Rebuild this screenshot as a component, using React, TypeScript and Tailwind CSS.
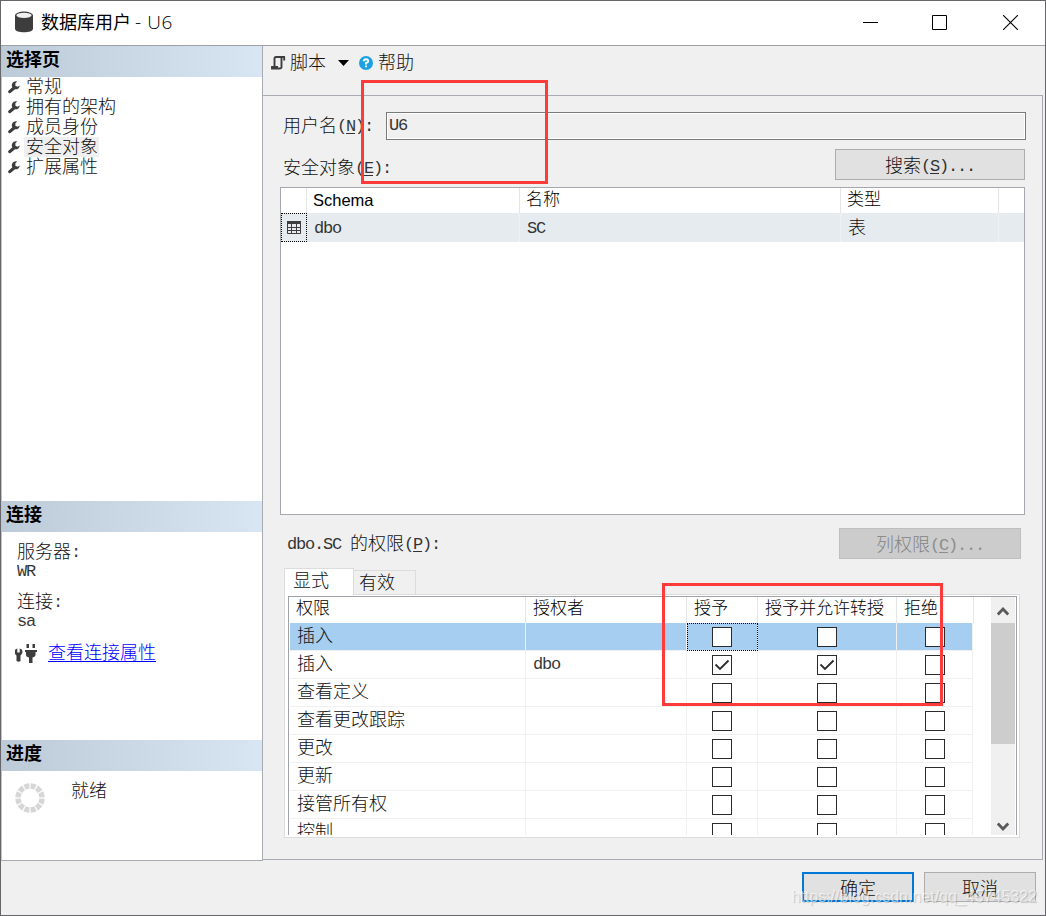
import { Fragment, ReactNode } from 'react';
import clsx from 'clsx';

const pages = ['常规', '拥有的架构', '成员身份', '安全对象', '扩展属性'];

const permissions = [
  { name: '插入', grantor: '', grant: false, withGrant: false, deny: false },
  { name: '插入', grantor: 'dbo', grant: true, withGrant: true, deny: false },
  { name: '查看定义', grantor: '', grant: false, withGrant: false, deny: false },
  { name: '查看更改跟踪', grantor: '', grant: false, withGrant: false, deny: false },
  { name: '更改', grantor: '', grant: false, withGrant: false, deny: false },
  { name: '更新', grantor: '', grant: false, withGrant: false, deny: false },
  { name: '接管所有权', grantor: '', grant: false, withGrant: false, deny: false },
  { name: '控制', grantor: '', grant: false, withGrant: false, deny: false },
];

const latin = "font-['Liberation_Mono',monospace] text-[17px] leading-none tracking-[-1.2px] align-[1px] opacity-85";

// Latin runs are set narrower, two of them per ideograph. "&" marks the access key.
function Label({ text }: { text: string }) {
  const parts = text.match(/&.|[ -%'-~]+|[^ -~]+/g) || [];
  return (
    <>
      {parts.map((p, i) => {
        if (p[0] === '&') {
          return <span key={i} className={clsx(latin, 'underline decoration-1 underline-offset-2')}>{p[1]}</span>;
        }
        if (p.charCodeAt(0) < 128) {
          return <span key={i} className={latin}>{p}</span>;
        }
        return <Fragment key={i}>{p}</Fragment>;
      })}
    </>
  );
}

function PanelHeader({ children }: { children: ReactNode }) {
  return (
    <div className="h-[31px] shrink-0 bg-linear-to-r from-[#bdcbd9] to-[#d8e5f3] pl-1 text-[18px] leading-[25px] font-bold text-black">
      {children}
    </div>
  );
}

function Wrench() {
  return (
    <svg width="12" height="13" viewBox="0 0 12 13" className="shrink-0">
      <path d="M1.8 10.600 6 7" stroke="#3d3d3d" strokeWidth="3.200" strokeLinecap="round" />
      <path d="M9.200.6a4 4 0 1 0 2.600 3.900L9.600 5.700 7.400 4.800 7.400 2.300z" fill="#3d3d3d" />
    </svg>
  );
}

function Box({ checked }: { checked: boolean }) {
  return (
    <span className="flex size-5 shrink-0 items-center justify-center border border-[#2b2b2b] bg-white">
      {checked && (
        <svg width="16" height="14" viewBox="0 0 16 14" fill="none">
          <path d="M1.5 6.5 6 11 14.5 2.5" stroke="#2b2b2b" strokeWidth="1.8" />
        </svg>
      )}
    </span>
  );
}

function Sidebar() {
  return (
    <div className="flex h-[815px] w-[262px] shrink-0 flex-col border-r border-b border-l border-[#a9abb3] border-l-[#c4c4c4] bg-white">
      <PanelHeader>选择页</PanelHeader>
      <div className="h-[424px]">
        {pages.map(page => (
          <div key={page} className="flex h-5 items-center pl-[6px]">
            <Wrench />
            <span className={clsx('ml-1 h-5 pr-px pl-[2px] leading-[17px]', page === '安全对象' && 'bg-[#efefef]')}>{page}</span>
          </div>
        ))}
      </div>
      <PanelHeader>连接</PanelHeader>
      <div className="h-[208px] pt-[10px] pl-[15px] leading-[17px]">
        <div className="h-[19px]"><Label text="服务器:" /></div>
        <div className="h-[31px]"><Label text="WR" /></div>
        <div className="h-[19px]"><Label text="连接:" /></div>
        <div className="h-[30px]"><Label text="sa" /></div>
        <div className="flex h-5 items-center">
          <svg width="22" height="20" viewBox="0 0 22 20" className="mt-[6px] -ml-[2px]">
            <path d="M.3 5.500 2.300 4.500V8.500h2.400V4.500L6.800 5.500q1.800 3.800-1.300 6V17q-2 1.600-4 0v-5.500Q-1.400 9.300.3 5.500z" fill="#3d3d3d" />
            <path d="M11.500 0h2.500v4h-2.500zM17.500 0H20v4h-2.500zM10 6H22v2H20.500v3.200q-.5 2-3 2.300V19h-3.500v-5.500q-2.800-.3-3-2.300V8H10z" fill="#3d3d3d" />
          </svg>
          <a className="ml-[11px] text-[#0000ff] underline decoration-1 underline-offset-2">查看连接属性</a>
        </div>
      </div>
      <PanelHeader>进度</PanelHeader>
      <div className="flex pt-[10px] pl-[13px] leading-[17px]">
        <svg width="30" height="30" viewBox="0 0 30 30" className="mt-[2px]">
          <circle cx="15" cy="15" r="12" fill="none" stroke="#d6d6d6" strokeWidth="5.5" pathLength="120" strokeDasharray="8 2" strokeDashoffset="-1" />
        </svg>
        <span className="ml-[26px]">就绪</span>
      </div>
    </div>
  );
}

function Toolbar() {
  return (
    <div className="flex h-[49px] items-start pt-[6px] pl-[8px] leading-[19px]">
      <svg width="15" height="14" viewBox="0 0 15 14" fill="none" className="mt-1" stroke="#3d3d3d" strokeWidth="1.900">
        <path d="M3.500 10V2.500q0-1.500 1.500-1.500H14M13.200 1v3.500M10.500 1v10q0 1.500-2 1.500H1V11H7" />
      </svg>
      <span className="ml-1">脚本</span>
      <svg width="11" height="6" viewBox="0 0 11 6" className="mt-2 ml-3"><path d="M0 0h11L5.500 6z" /></svg>
      <svg width="14" height="14" viewBox="0 0 14 14" className="mt-1 ml-[10px]">
        <circle cx="7" cy="7" r="7" fill="#1ba1e2" />
        <path d="M4.800 5.300Q4.900 3.300 7 3.300t2.100 1.900Q9.100 6.400 7 7v1.400" fill="none" stroke="#fff" strokeWidth="1.9" />
        <path d="M6 9.400h2v1.900H6z" fill="#fff" />
      </svg>
      <span className="ml-[5px]">帮助</span>
    </div>
  );
}

function SecurablesList() {
  return (
    <div className="mt-[7px] ml-[17px] h-[328px] w-[745px] border border-[#a5a7af] bg-white">
      <div className="grid h-[25px] grid-cols-[26px_213px_321px_158px_1fr] text-[17px] leading-[20px] text-black *:border-r *:border-[#e5e5e5]">
        <span />
        <span className="pl-[6px] font-['Liberation_Sans',sans-serif] text-[16.5px] leading-[25px]">Schema</span>
        <span className="pl-[6px]">名称</span>
        <span className="pl-[6px]">类型</span>
        <span className="border-r-0!" />
      </div>
      <div className="grid h-[29px] grid-cols-[26px_213px_321px_158px_1fr] grid-rows-[29px] bg-[#e6ebef] leading-[26px] *:border-r *:border-[#eff2f5]">
        <span className="flex items-center justify-center border border-dotted border-black!">
          <svg width="14" height="13" viewBox="0 0 14 13" fill="none" stroke="#3d3d3d">
            <path d="M.5.5h13v12H.5zM.5 6.500h13M.5 9.500h13M4.500 3v10M9.500 3v10" />
            <path d="M0 1.500h14" strokeWidth="3" />
          </svg>
        </span>
        <span className="pl-[7px]"><Label text="dbo" /></span>
        <span className="pl-[7px]"><Label text="SC" /></span>
        <span className="pl-[7px]">表</span>
        <span className="border-r-0!" />
      </div>
    </div>
  );
}

function PermissionGrid() {
  return (
    <div className="flex h-[239px] w-[729px] overflow-hidden border-t border-r border-l border-[#a0a2aa] bg-white">
      <div className="w-[685px] shrink-0">
        <div className="grid h-[26px] grid-cols-[237px_161px_71px_139px_77px] text-[17px] leading-[20px] text-black *:border-r *:border-[#e5e5e5] *:pl-[7px]">
          <span>权限</span>
          <span>授权者</span>
          <span>授予</span>
          <span>授予并允许转授</span>
          <span>拒绝</span>
        </div>
        {permissions.map((p, i) => (
          <div
            key={i}
            className={clsx(
              'ml-px grid h-7 w-[683px] grid-cols-[236px_161px_71px_139px_76px] grid-rows-[28px] leading-[23px] *:border-r *:border-b *:border-[#f0f0f0]',
              i === 0 && 'bg-[#a5cef0]',
            )}
          >
            <span className="pl-[7px]">{p.name}</span>
            <span className="pl-[7px]"><Label text={p.grantor} /></span>
            <span className={clsx('flex items-center justify-center', i === 0 && 'outline-1 -outline-offset-1 outline-dotted outline-black')}>
              <Box checked={p.grant} />
            </span>
            <span className="flex items-center justify-center"><Box checked={p.withGrant} /></span>
            <span className="flex items-center justify-center"><Box checked={p.deny} /></span>
          </div>
        ))}
      </div>
      {/* Scrollbar */}
      <div className="ml-[17px] flex h-[238px] w-6 shrink-0 flex-col bg-[#f0f0f0]">
        <div className="flex h-[26px] items-center justify-center pt-[3px]">
          <svg width="12" height="9" viewBox="0 0 12 9" fill="none" stroke="#5a5a5a" strokeWidth="2.800"><path d="m.8 7.500 5.200-5.500 5.200 5.500" /></svg>
        </div>
        <div className="h-[121px] bg-[#cdcdcd]" />
        <svg width="12" height="9" viewBox="0 0 12 9" fill="none" stroke="#5a5a5a" strokeWidth="2.800" className="mt-auto mb-1 self-center"><path d="m.8 1.500 5.200 5.500 5.200-5.500" /></svg>
      </div>
    </div>
  );
}

export default function App() {
  return (
    <div className="relative flex h-[916px] w-[1046px] flex-col overflow-hidden border border-[#66666a] bg-[#f0f0f0] font-['Noto_Sans_CJK_SC',sans-serif] text-[18px] font-light text-[#111]">
      {/* Title bar */}
      <div className="flex h-[45px] shrink-0 items-center border-b border-[#a0a0a4] bg-white pl-[14px] text-black">
        <svg width="18" height="22" viewBox="0 0 19 22" className="mb-[2px]">
          <path d="M0 4v14c0 5 19 5 19 0V4z" fill="#3d3d3d" />
          <ellipse cx="9.500" cy="4" rx="9.500" ry="4" fill="#3d3d3d" />
          <ellipse cx="9.500" cy="4" rx="8" ry="2.800" fill="#f0f0f0" />
        </svg>
        <span className="mb-1 ml-2 font-normal">数据库用户 <span className="font-['Open_Sans',sans-serif] text-[19px] leading-none font-light tracking-[0.6px]">- U6</span></span>
        <div className="mr-[27px] mb-px ml-auto flex items-center gap-[54px]">
          <svg width="15" height="15" stroke="#000"><path d="M0 7.500h15" /></svg>
          <svg width="15" height="15" fill="none" stroke="#000"><path d="M.5.5h14v14H.5z" /></svg>
          <svg width="15" height="15" stroke="#000" strokeWidth="1.100" className="ml-[2px]"><path d="m0 0 15 15m0-15-15 15" /></svg>
        </div>
      </div>

      <div className="flex h-[815px] shrink-0">
        <Sidebar />
        <div className="w-[780px]">
          <Toolbar />
          <div className="h-[765px] border-t border-r border-b border-[#a9abb3]">
            <div className="mt-4 flex h-7 items-center pl-5">
              <span className="mb-[3px] w-[103px] whitespace-nowrap"><Label text="用户名(&N):" /></span>
              <div className="h-7 w-[640px] border border-[#7a7a7a] p-px">
                <div className="h-full bg-[#f0f0f0] pl-px leading-[19px] outline-1 outline-white"><Label text="U6" /></div>
              </div>
            </div>
            <div className="mt-[9px] flex h-[31px] items-center justify-between pr-[17px] pl-5">
              <span className="mt-1"><Label text="安全对象(&E):" /></span>
              <button className="h-[31px] w-[190px] border border-[#adadad] bg-[#e1e1e1] leading-[25px]"><Label text="搜索(&S)..." /></button>
            </div>
            <SecurablesList />

            <div className="mt-[13px] flex h-[31px] items-center justify-between pr-[21px] pl-6">
              <span className="mb-[2px]"><Label text="dbo.SC 的权限(&P):" /></span>
              <button className="h-[31px] w-[182px] border border-[#bfbfbf] bg-[#cccccc] leading-[27px] text-[#838383]"><Label text="列权限(&C)..." /></button>
            </div>

            {/* Tabs */}
            <div className="mt-[9px] ml-[21px] flex h-[26px] items-end">
              <div className="relative z-10 -mb-px h-[27px] w-[70px] border border-b-0 border-[#dcdcdc] bg-white pl-2 leading-[21px]">显式</div>
              <div className="h-6 w-[62px] border-t border-r border-[#dcdcdc] pl-[5px] leading-[21px]">有效</div>
            </div>
            <div className="ml-[21px] h-[244px] w-[736px] border border-[#dcdcdc] bg-white pt-px pl-[3px]">
              <PermissionGrid />
            </div>
          </div>
        </div>
      </div>

      <div className="flex justify-end gap-[10px] pt-[11px] pr-[9px]">
        <button className="h-[30px] w-28 border-2 border-[#0078d7] bg-[#e1e1e1] leading-[25px]">确定</button>
        <button className="h-[30px] w-28 border border-[#adadad] bg-[#e1e1e1] leading-[27px]">取消</button>
      </div>

      {/* Highlight marks and watermark */}
      <div className="pointer-events-none absolute top-[79px] left-[360px] h-[104px] w-[187px] border-3 border-[#ff3a3a]" />
      <div className="pointer-events-none absolute top-[582px] left-[661px] h-[123px] w-[281px] border-3 border-[#ff3a3a]" />
      <div className="pointer-events-none absolute top-[886px] right-[8px] font-['Liberation_Sans',sans-serif] text-[16px] leading-5 font-normal text-white/60 [text-shadow:1px_1px_1px_rgba(0,0,0,0.18)]">
        https://blog.csdn.net/qq_45745322
      </div>
    </div>
  );
}
